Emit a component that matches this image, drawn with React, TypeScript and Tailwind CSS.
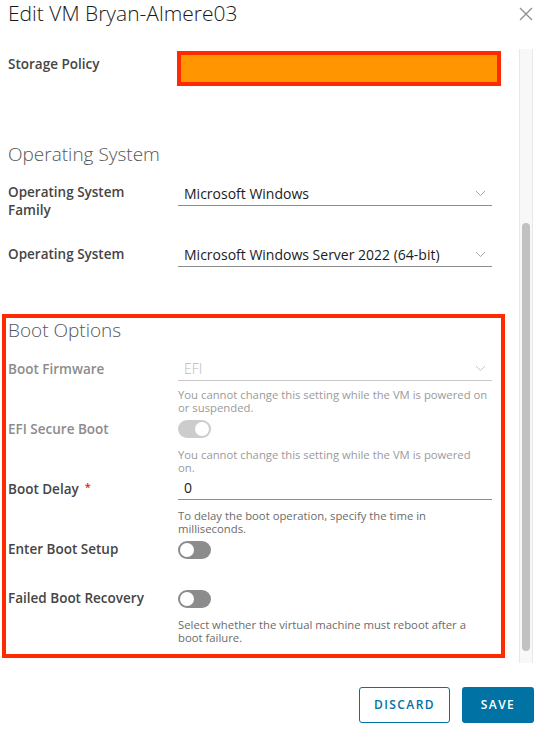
import type { ReactNode } from "react";

const font = { fontFamily: "'Open Sans', 'Liberation Sans', sans-serif" };

function Chevron({ muted = false }: { muted?: boolean }) {
  return (
    <svg width="11" height="7" viewBox="0 0 11 7" className="shrink-0">
      <path
        d="M1 1l4.5 4.5L10 1"
        fill="none"
        stroke={muted ? "#c8c8c8" : "#a6a6a6"}
        strokeWidth="1"
      />
    </svg>
  );
}

function Select({ value, disabled = false }: { value: string; disabled?: boolean }) {
  return (
    <div
      className={`flex h-[24px] w-[314px] items-center justify-between border-b pl-[6px] pr-[6px] ${
        disabled ? "border-[#c9c9c9]" : "border-[#8c8c8c]"
      }`}
    >
      <span
        className={`text-[14px] leading-none ${
          disabled ? "font-light text-[#b8b8b8]" : "text-[#1b1b1b]"
        }`}
      >
        {value}
      </span>
      <Chevron muted={disabled} />
    </div>
  );
}

function Toggle({ on = false, disabled = false }: { on?: boolean; disabled?: boolean }) {
  return (
    <div
      className={`flex h-[18px] w-[33px] items-center rounded-full px-[2px] ${
        disabled ? "bg-[#cccccc]" : "bg-[#8c8c8c]"
      } ${on ? "justify-end" : "justify-start"}`}
    >
      <span className="h-[14px] w-[14px] rounded-full bg-white" />
    </div>
  );
}

function Helper({ children, muted = false }: { children: ReactNode; muted?: boolean }) {
  return (
    <p
      className={`text-[11.3px] leading-[13px] ${
        muted ? "text-[#9a9a9a]" : "text-[#6b6b6b]"
      }`}
    >
      {children}
    </p>
  );
}

function Row({
  label,
  children,
  disabled = false,
  required = false,
  labelPad = "pt-0",
  className = "",
}: {
  label: ReactNode;
  children: ReactNode;
  disabled?: boolean;
  required?: boolean;
  labelPad?: string;
  className?: string;
}) {
  return (
    <div className={`flex items-start ${className}`}>
      <div
        className={`w-[170px] shrink-0 pr-4 text-[13.5px] font-semibold leading-[18px] ${labelPad} ${
          disabled ? "text-[#8c8c8c]" : "text-[#454545]"
        }`}
      >
        {label}
        {required && (
          <span className="ml-[6px] align-top text-[11px] leading-[14px] text-[#e12200]">*</span>
        )}
      </div>
      <div className="flex flex-col">{children}</div>
    </div>
  );
}

export default function App() {
  return (
    <div className="flex h-[737px] w-[552px] flex-col overflow-hidden bg-white" style={font}>
      <header className="flex h-[49px] shrink-0 items-start justify-between pl-2 pr-[19px]">
        <h1 className="mt-[-2px] text-[21px] font-light leading-[30px] text-[#1a1a1a]">
          Edit VM Bryan-Almere03
        </h1>
        <svg width="14" height="14" viewBox="0 0 14 14" className="mt-[7px]">
          <path d="M1 1l12 12M13 1L1 13" stroke="#8c8c8c" strokeWidth="1.2" />
        </svg>
      </header>

      <div className="flex h-[614px] shrink-0 overflow-hidden">
        <div className="flex-1 pl-2">
          <Row label="Storage Policy" labelPad="pt-[4px]" className="mt-[2px]">
            <div className="ml-[-1px] h-[35px] w-[324px] border-4 border-[#ff2a00] bg-[#ff9500]" />
          </Row>

          <h2 className="mt-[56px] text-[19px] font-light leading-[24px] text-[#565656]">
            Operating System
          </h2>

          <Row label="Operating System Family" labelPad="pt-[1px]" className="mt-[16px] h-[61px]">
            <Select value="Microsoft Windows" />
          </Row>

          <Row label="Operating System" labelPad="pt-[2px]">
            <Select value="Microsoft Windows Server 2022 (64-bit)" />
          </Row>

          <section className="mt-[47px] ml-[-6px] w-[503px] border-4 border-[#ff2a00] pb-[10px] pl-[2px]">
            <h2 className="text-[19px] font-light leading-[24px] text-[#565656]">
              Boot Options
            </h2>

            <Row label="Boot Firmware" disabled labelPad="pt-[3px]" className="mt-[15px]">
              <Select value="EFI" disabled />
              <div className="mt-[7px]">
                <Helper muted>
                  You cannot change this setting while the VM is powered on
                  <br />
                  or suspended.
                </Helper>
              </div>
            </Row>

            <Row label="EFI Secure Boot" disabled className="mt-[6px]">
              <Toggle on disabled />
              <div className="mt-[10px]">
                <Helper muted>
                  You cannot change this setting while the VM is powered
                  <br />
                  on.
                </Helper>
              </div>
            </Row>

            <Row label="Boot Delay" required labelPad="pt-[4px]" className="mt-[2px]">
              <div className="flex h-[24px] w-[314px] items-center border-b border-[#8c8c8c] pl-[6px]">
                <span className="text-[14px] leading-none text-[#1b1b1b]">0</span>
              </div>
              <div className="mt-[9px]">
                <Helper>
                  To delay the boot operation, specify the time in
                  <br />
                  milliseconds.
                </Helper>
              </div>
            </Row>

            <Row label="Enter Boot Setup" className="mt-[5px]">
              <div className="mt-[1px]">
                <Toggle />
              </div>
            </Row>

            <Row label="Failed Boot Recovery" className="mt-[30px]">
              <div className="mt-[1px]">
                <Toggle />
              </div>
              <div className="mt-[10px]">
                <Helper>
                  Select whether the virtual machine must reboot after a
                  <br />
                  boot failure.
                </Helper>
              </div>
            </Row>
          </section>
        </div>

        <div className="mr-[19px] flex w-[14px] shrink-0 justify-center border-x border-[#e8e8e8] bg-[#f8f8f8]">
          <div className="mt-[174px] h-[428px] w-[8px] rounded-full bg-[#c1c1c1]" />
        </div>
      </div>

      <footer className="flex flex-1 items-start justify-end gap-3 pr-[18px] pt-[24px]">
        <button className="h-[36px] w-[91px] rounded-[3px] border border-[#0072a3] text-[12px] font-semibold tracking-[0.12em] text-[#0072a3]">
          DISCARD
        </button>
        <button className="h-[36px] w-[72px] rounded-[3px] bg-[#0072a3] text-[12px] font-semibold tracking-[0.12em] text-white">
          SAVE
        </button>
      </footer>
    </div>
  );
}
